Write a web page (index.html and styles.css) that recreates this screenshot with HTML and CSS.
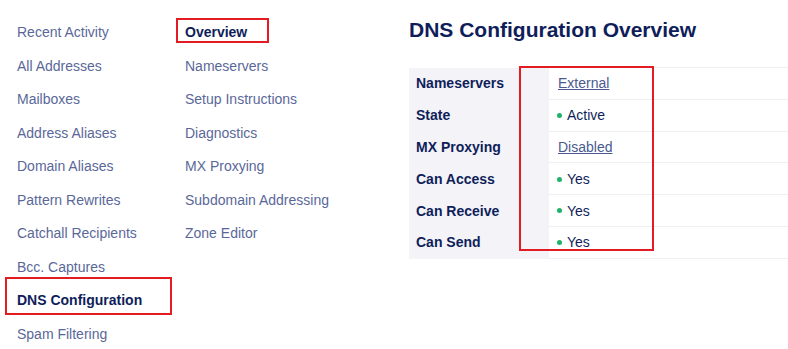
FILE: index.html
```html
<!DOCTYPE html>
<html lang="en">
<head>
    <meta charset="UTF-8">
    <meta name="viewport" content="width=device-width, initial-scale=1.0">
    <title>DNS Configuration Overview</title>
    <link rel="stylesheet" href="styles.css">
</head>
<body>

    <div class="page">
        <ul class="nav nav-main">
            <li><a href="#">Recent Activity</a></li>
            <li><a href="#">All Addresses</a></li>
            <li><a href="#">Mailboxes</a></li>
            <li><a href="#">Address Aliases</a></li>
            <li><a href="#">Domain Aliases</a></li>
            <li><a href="#">Pattern Rewrites</a></li>
            <li><a href="#">Catchall Recipients</a></li>
            <li><a href="#">Bcc. Captures</a></li>
            <li class="active mark-dns"><a href="#">DNS Configuration</a></li>
            <li><a href="#">Spam Filtering</a></li>
        </ul>

        <ul class="nav nav-sub">
            <li class="active mark-overview"><a href="#">Overview</a></li>
            <li><a href="#">Nameservers</a></li>
            <li><a href="#">Setup Instructions</a></li>
            <li><a href="#">Diagnostics</a></li>
            <li><a href="#">MX Proxying</a></li>
            <li><a href="#">Subdomain Addressing</a></li>
            <li><a href="#">Zone Editor</a></li>
        </ul>

        <div class="content">
            <h1>DNS Configuration Overview</h1>
            <div class="table-wrap">
                <table class="info">
                    <tr>
                        <th>Nameservers</th>
                        <td><a href="#">External</a></td>
                    </tr>
                    <tr>
                        <th>State</th>
                        <td><span class="dot"></span>Active</td>
                    </tr>
                    <tr>
                        <th>MX Proxying</th>
                        <td><a href="#">Disabled</a></td>
                    </tr>
                    <tr>
                        <th>Can Access</th>
                        <td><span class="dot"></span>Yes</td>
                    </tr>
                    <tr>
                        <th>Can Receive</th>
                        <td><span class="dot"></span>Yes</td>
                    </tr>
                    <tr>
                        <th>Can Send</th>
                        <td><span class="dot"></span>Yes</td>
                    </tr>
                </table>
                <div class="mark-values"></div>
            </div>
        </div>
    </div>

</body>
</html>
```

FILE: styles.css
```css
body {
    margin: 0;
    font-family: "Liberation Sans", Arial, sans-serif;
    font-size: 14px;
    color: #0f1e5a;
    background: #fff;
    overflow: hidden;
}
.page {
    display: flex;
    padding-left: 17px;
}
.nav {
    list-style: none;
    margin: 0;
    padding: 16px 0 0 0;
}
.nav li {
    position: relative;
    line-height: 33.5px;
    white-space: nowrap;
}
.nav a {
    color: #5a6899;
    text-decoration: none;
}
.nav .active a {
    color: #0f1e5a;
    font-weight: bold;
}
.nav-main {
    width: 168px;
}
.nav-sub {
    width: 224px;
}
/* red annotation boxes */
.mark-dns::after,
.mark-overview::after,
.mark-values {
    content: "";
    position: absolute;
    border: 2px solid #e31b23;
    pointer-events: none;
}
.mark-dns::after {
    left: -12px;
    top: -7px;
    width: 163px;
    height: 34px;
}
.mark-overview::after {
    left: -9px;
    top: 2px;
    width: 89px;
    height: 21px;
}
.content {
    flex: 1;
    min-width: 0;
}
h1 {
    margin: 18px 0 0 0;
    font-size: 21px;
    line-height: 24px;
    color: #0f1e5a;
}
.table-wrap {
    position: relative;
    margin-top: 25px;
}
.info {
    border-collapse: collapse;
    width: 100%;
}
.info th,
.info td {
    height: 30.8px;
    padding: 0;
    text-align: left;
    border-bottom: 1px solid #eeeef3;
}
.info tr:first-child td {
    border-top: 1px solid #eeeef3;
}
.info th {
    width: 140px;
    padding-left: 7px;
    box-sizing: border-box;
    background: #f3f3f8;
    border-bottom-color: #f3f3f8;
    font-weight: bold;
    color: #0f1e5a;
}
.info td {
    padding-left: 9px;
    color: #0f1e5a;
}
.info td a {
    color: #4a5a8f;
}
.dot {
    display: inline-block;
    width: 5px;
    height: 5px;
    border-radius: 50%;
    background: #1db36b;
    margin: 0 5px 2px -1px;
    vertical-align: middle;
}
.mark-values {
    left: 110px;
    top: -1px;
    width: 131px;
    height: 181px;
}
```
